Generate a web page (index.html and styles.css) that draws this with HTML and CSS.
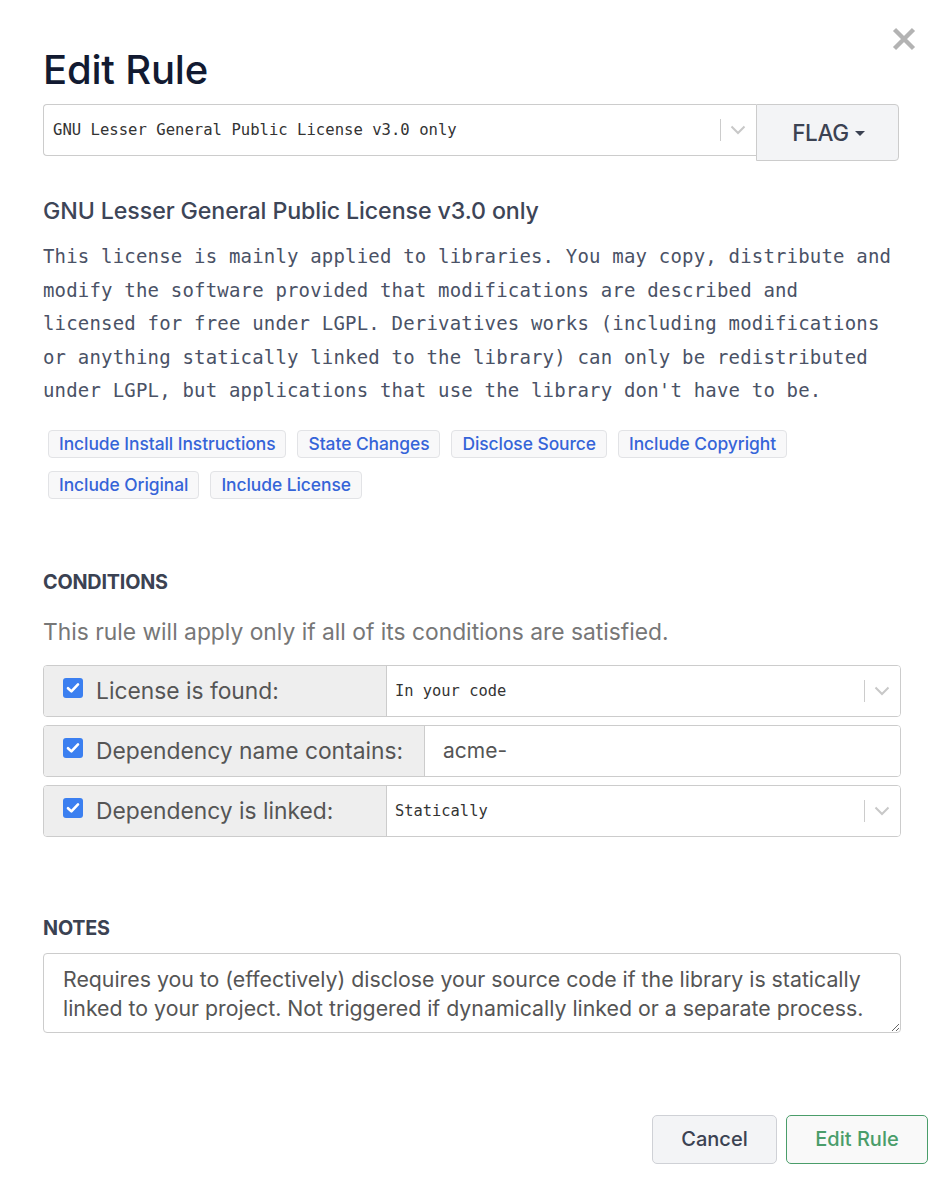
FILE: index.html
```html
<!DOCTYPE html>
<html>
<head>
<meta charset="utf-8">
<link rel="stylesheet" href="styles.css">
</head>
<body>
<div class="modal">
  <button class="close" aria-label="Close">
    <svg width="24" height="24" viewBox="0 0 24 24"><path d="M2.5 2.5 L21.5 21.5 M21.5 2.5 L2.5 21.5" stroke="#b3b3b3" stroke-width="4.4" stroke-linecap="butt"/></svg>
  </button>
  <h1 class="title">Edit Rule</h1>
  <div class="license-row">
    <div class="select main-select">
      <span class="select-value">GNU Lesser General Public License v3.0 only</span>
      <span class="select-ind"><span class="sep"></span><svg class="chev" width="16" height="10" viewBox="0 0 16 10"><path d="M1.5 1.5 L8 8 L14.5 1.5" fill="none" stroke="#c8c8c8" stroke-width="2"/></svg></span>
    </div>
    <button class="flag">FLAG <span class="caret"></span></button>
  </div>

  <h2 class="lic-name">GNU Lesser General Public License v3.0 only</h2>
  <p class="desc">This license is mainly applied to libraries. You may copy, distribute and modify the software provided that modifications are described and licensed for free under LGPL. Derivatives works (including modifications or anything statically linked to the library) can only be redistributed under LGPL, but applications that use the library don't have to be.</p>

  <div class="tags">
    <span class="tag">Include Install Instructions</span>
    <span class="tag">State Changes</span>
    <span class="tag">Disclose Source</span>
    <span class="tag">Include Copyright</span>
    <span class="tag">Include Original</span>
    <span class="tag">Include License</span>
  </div>

  <h3 class="section-label conditions-label">CONDITIONS</h3>
  <p class="hint">This rule will apply only if all of its conditions are satisfied.</p>

  <div class="conditions">
    <div class="cond">
      <label class="cond-label"><span class="check"><svg width="14" height="12" viewBox="0 0 14 12"><path d="M2 6.2 L5.4 9.4 L12 2.4" fill="none" stroke="#fff" stroke-width="2.6" stroke-linecap="round" stroke-linejoin="round"/></svg></span>License is found:</label>
      <div class="cond-select">
        <span class="cond-value">In your code</span>
        <span class="select-ind"><span class="sep"></span><svg class="chev" width="16" height="10" viewBox="0 0 16 10"><path d="M1.5 1.5 L8 8 L14.5 1.5" fill="none" stroke="#c8c8c8" stroke-width="2"/></svg></span>
      </div>
    </div>
    <div class="cond">
      <label class="cond-label wide"><span class="check"><svg width="14" height="12" viewBox="0 0 14 12"><path d="M2 6.2 L5.4 9.4 L12 2.4" fill="none" stroke="#fff" stroke-width="2.6" stroke-linecap="round" stroke-linejoin="round"/></svg></span>Dependency name contains:</label>
      <div class="cond-input">acme-</div>
    </div>
    <div class="cond">
      <label class="cond-label"><span class="check"><svg width="14" height="12" viewBox="0 0 14 12"><path d="M2 6.2 L5.4 9.4 L12 2.4" fill="none" stroke="#fff" stroke-width="2.6" stroke-linecap="round" stroke-linejoin="round"/></svg></span>Dependency is linked:</label>
      <div class="cond-select">
        <span class="cond-value">Statically</span>
        <span class="select-ind"><span class="sep"></span><svg class="chev" width="16" height="10" viewBox="0 0 16 10"><path d="M1.5 1.5 L8 8 L14.5 1.5" fill="none" stroke="#c8c8c8" stroke-width="2"/></svg></span>
      </div>
    </div>
  </div>

  <h3 class="section-label notes-label">NOTES</h3>
  <textarea class="notes" wrap="off">Requires you to (effectively) disclose your source code if the library is statically
linked to your project. Not triggered if dynamically linked or a separate process.</textarea>

  <div class="footer">
    <button class="btn cancel">Cancel</button>
    <button class="btn submit">Edit Rule</button>
  </div>
</div>
</body>
</html>
```

FILE: styles.css
```css
* { box-sizing: border-box; }

html, body {
  margin: 0;
  padding: 0;
  background: #ffffff;
}

body {
  font-family: Inter, "Noto Sans", sans-serif;
  color: #3b4252;
}

.modal {
  position: relative;
  width: 948px;
  min-height: 1180px;
  padding: 46px 20px 0 43px;
  background: #fff;
}

.close {
  position: absolute;
  top: 27px;
  right: 32px;
  border: 0;
  background: transparent;
  padding: 0;
  width: 24px;
  height: 24px;
  display: flex;
}

.title {
  margin: 0;
  font-size: 40px;
  line-height: 48px;
  font-weight: 500;
  color: #121a31;
  letter-spacing: -0.2px;
}

.license-row {
  margin-top: 10px;
  width: 856px;
  display: flex;
  align-items: flex-start;
}

.select {
  height: 52px;
  border: 1px solid #cccccc;
  border-radius: 4px 0 0 4px;
  display: flex;
  align-items: center;
  background: #fff;
}

.main-select {
  flex: 1;
  border-right: 0;
  padding-left: 9px;
}

.select-value {
  flex: 1;
  font-family: "DejaVu Sans Mono", monospace;
  font-size: 15.6px;
  color: #333;
}

.select-ind {
  display: flex;
  align-items: center;
  gap: 9px;
  padding-right: 10px;
}

.sep {
  display: block;
  width: 1px;
  height: 22px;
  background: #cccccc;
}

.chev { display: block; }

.flag {
  width: 143px;
  height: 57px;
  border: 1px solid #cccccc;
  border-radius: 0 4px 4px 0;
  background: #f3f4f6;
  font-family: Inter, sans-serif;
  font-size: 22.5px;
  font-weight: 500;
  color: #3b4252;
  display: flex;
  align-items: center;
  justify-content: center;
  gap: 6px;
  padding: 0 0 0 2px;
  letter-spacing: -0.3px;
}

.caret {
  display: block;
  width: 0;
  height: 0;
  border-left: 5px solid transparent;
  border-right: 5px solid transparent;
  border-top: 5px solid #3b4252;
  margin-top: 2px;
}

.lic-name {
  margin: 36px 0 0;
  font-size: 23.2px;
  line-height: 28px;
  font-weight: 500;
  color: #3d4557;
  letter-spacing: -0.1px;
}

.desc {
  margin: 15px 0 0;
  width: 852px;
  font-family: "DejaVu Sans Mono", monospace;
  font-size: 19px;
  letter-spacing: 0.18px;
  line-height: 33.6px;
  color: #4a5266;
}

.tags {
  margin-top: 22px;
  padding-left: 5px;
  width: 800px;
  display: flex;
  flex-wrap: wrap;
  gap: 13px 11px;
}

.tag {
  display: block;
  height: 28px;
  line-height: 26px;
  padding: 0 10px;
  border: 1px solid #e2e3e6;
  border-radius: 4px;
  background: #f8f8f9;
  color: #3564d8;
  font-size: 17.4px;
  font-weight: 500;
  letter-spacing: -0.05px;
}

.section-label {
  margin: 0;
  font-size: 19.8px;
  line-height: 24px;
  font-weight: 700;
  color: #3b4252;
  letter-spacing: -0.2px;
}

.conditions-label { margin-top: 71px; }

.hint {
  margin: 24px 0 0;
  font-size: 22.8px;
  line-height: 28px;
  color: #777;
}

.conditions {
  margin-top: 19px;
  width: 858px;
  display: flex;
  flex-direction: column;
  gap: 8px;
}

.cond {
  display: flex;
  height: 52px;
  border: 1px solid #cccccc;
  border-radius: 4px;
  overflow: hidden;
}

.cond-label {
  width: 343px;
  flex: none;
  background: #eeeeee;
  border-right: 1px solid #cccccc;
  display: flex;
  align-items: center;
  padding-left: 19px;
  gap: 13px;
  font-size: 22.8px;
  color: #555;
}

.cond-label.wide { width: 381px; }

.check {
  width: 20px;
  height: 20px;
  border-radius: 3px;
  background: #3b7ff0;
  display: flex;
  align-items: center;
  justify-content: center;
  margin-top: -6px;
  flex: none;
}

.cond-select {
  flex: 1;
  display: flex;
  align-items: center;
  padding-left: 8px;
  background: #fff;
}

.cond-value {
  flex: 1;
  font-family: "DejaVu Sans Mono", monospace;
  font-size: 15.4px;
  color: #333;
}

.cond-input {
  flex: 1;
  display: flex;
  align-items: center;
  padding-left: 18px;
  background: #fff;
  font-size: 21px;
  color: #555;
}

.notes-label { margin-top: 79px; }

.notes {
  display: block;
  margin-top: 13px;
  width: 858px;
  height: 80px;
  border: 1px solid #cccccc;
  border-radius: 4px;
  padding: 11px 19px;
  font-family: Inter, sans-serif;
  font-size: 21.3px;
  line-height: 29px;
  color: #555;
  resize: both;
  overflow: hidden;
  background: #fff;
}

.footer {
  margin-top: 82px;
  display: flex;
  justify-content: flex-end;
  gap: 9px;
}

.btn {
  height: 49px;
  border-radius: 5px;
  font-family: Inter, sans-serif;
  font-size: 20px;
  font-weight: 500;
  padding: 0;
}

.cancel {
  width: 125px;
  background: #f3f4f6;
  border: 1px solid #cfd1d6;
  color: #3b4252;
}

.submit {
  width: 142px;
  background: #f9f9f9;
  border: 1px solid #4a9d6a;
  color: #4a9d6a;
}
```
